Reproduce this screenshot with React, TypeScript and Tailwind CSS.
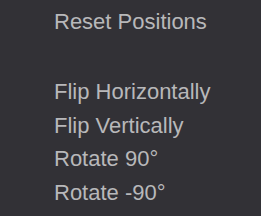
export default function App() {
  const items = ["Flip Horizontally", "Flip Vertically", "Rotate 90°", "Rotate -90°"];
  return (
    <div
      className="w-[261px] h-[216px] bg-[#323136] text-[#b8b8ba] pl-[54px] pt-[5px] text-[22px] leading-[33.5px]"
      style={{ fontFamily: '"Liberation Sans", Arial, sans-serif' }}
    >
      <div>Reset Positions</div>
      <div className="mt-[36.5px] flex flex-col">
        {items.map((item) => (
          <div key={item}>{item}</div>
        ))}
      </div>
    </div>
  );
}
